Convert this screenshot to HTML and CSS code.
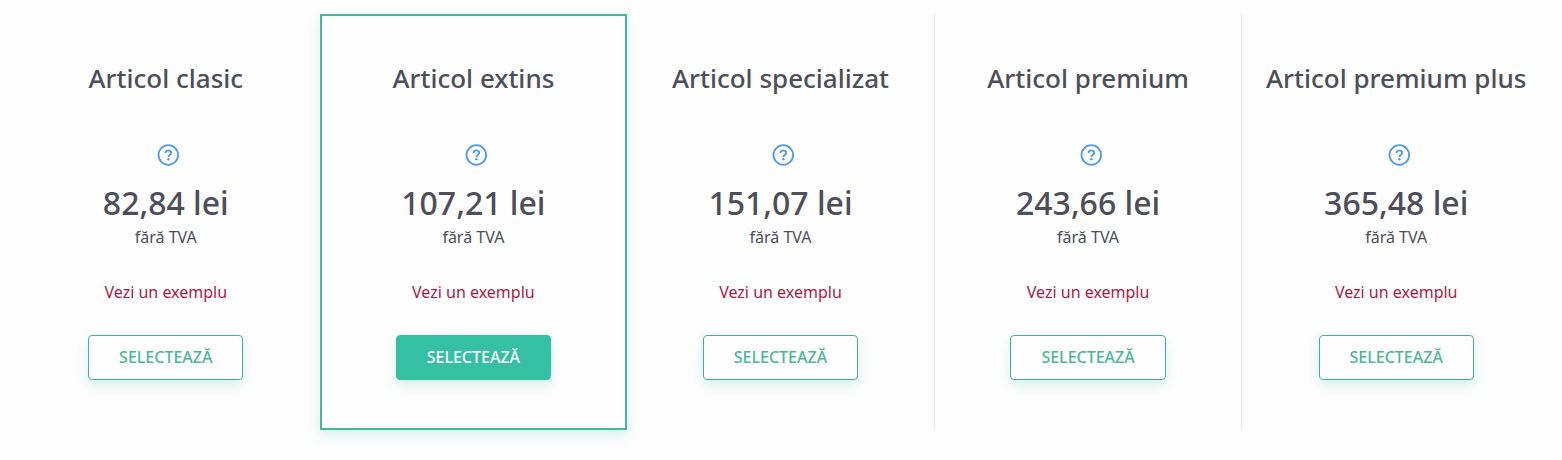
FILE: index.html
```html
<!DOCTYPE html>
<html lang="ro">
<head>
<meta charset="utf-8">
<meta name="viewport" content="width=device-width, initial-scale=1">
<title>Tipuri de articole</title>
<link rel="stylesheet" href="styles.css">
</head>
<body>
<svg class="sprite" aria-hidden="true">
  <symbol id="help" viewBox="0 0 22 22">
    <circle cx="11.3" cy="11" r="9.8" fill="none" stroke="currentColor" stroke-width="1.8"/>
    <path d="M8.5 9C8.5 7.3 9.7 6.3 11.3 6.3s2.9 .9 2.9 2.5c0 2-2.8 2-2.8 4.2" fill="none" stroke="currentColor" stroke-width="1.8"/>
    <circle cx="11.4" cy="15.3" r="1.2" fill="currentColor"/>
  </symbol>
</svg>
<main class="plans">
  <section class="plan">
    <h2 class="plan-title">Articol clasic</h2>
    <button class="help" type="button" aria-label="Detalii"><svg class="help-icon"><use href="#help"/></svg></button>
    <p class="price">82,84 lei</p>
    <p class="tax">fără TVA</p>
    <a class="example" href="#">Vezi un exemplu</a>
    <button class="select" type="button">SELECTEAZĂ</button>
  </section>
  <section class="plan plan-active">
    <h2 class="plan-title">Articol extins</h2>
    <button class="help" type="button" aria-label="Detalii"><svg class="help-icon"><use href="#help"/></svg></button>
    <p class="price">107,21 lei</p>
    <p class="tax">fără TVA</p>
    <a class="example" href="#">Vezi un exemplu</a>
    <button class="select select-active" type="button">SELECTEAZĂ</button>
  </section>
  <section class="plan plan-divided">
    <h2 class="plan-title">Articol specializat</h2>
    <button class="help" type="button" aria-label="Detalii"><svg class="help-icon"><use href="#help"/></svg></button>
    <p class="price">151,07 lei</p>
    <p class="tax">fără TVA</p>
    <a class="example" href="#">Vezi un exemplu</a>
    <button class="select" type="button">SELECTEAZĂ</button>
  </section>
  <section class="plan plan-divided">
    <h2 class="plan-title">Articol premium</h2>
    <button class="help" type="button" aria-label="Detalii"><svg class="help-icon"><use href="#help"/></svg></button>
    <p class="price">243,66 lei</p>
    <p class="tax">fără TVA</p>
    <a class="example" href="#">Vezi un exemplu</a>
    <button class="select" type="button">SELECTEAZĂ</button>
  </section>
  <section class="plan">
    <h2 class="plan-title">Articol premium plus</h2>
    <button class="help" type="button" aria-label="Detalii"><svg class="help-icon"><use href="#help"/></svg></button>
    <p class="price">365,48 lei</p>
    <p class="tax">fără TVA</p>
    <a class="example" href="#">Vezi un exemplu</a>
    <button class="select" type="button">SELECTEAZĂ</button>
  </section>
</main>
</body>
</html>
```

FILE: styles.css
```css
* {
  box-sizing: border-box;
}

body {
  margin: 0;
  background: #fefefe;
  color: #4c4e5a;
  font-family: "Noto Sans", sans-serif;
  font-size: 16px;
  line-height: 24px;
}

.sprite {
  display: none;
}

.plans {
  display: grid;
  grid-template-columns: repeat(5, 1fr);
  padding: 14px 12px 30px;
}

.plan {
  display: flex;
  flex-direction: column;
  align-items: center;
  padding: 48px 10px 50px;
  text-align: center;
}

.plan-divided {
  border-right: 1px solid #ebebeb;
}

.plan-active {
  padding: 46px 8px 48px;
  border: 2px solid #44b89d;
  box-shadow: 0 5px 12px rgba(53, 191, 163, 0.22);
}

.plan-title {
  margin: 0;
  font-size: 26px;
  font-weight: 500;
  line-height: 32px;
}

.help {
  display: flex;
  margin: 50px 0 0 5px;
  padding: 0;
  border: 0;
  background: none;
  color: #4f9be4;
}

.help-icon {
  width: 22px;
  height: 22px;
}

.price {
  margin: 17px 0 0;
  font-size: 32px;
  font-weight: 500;
  line-height: 40px;
}

.tax {
  margin: 2px 0 0;
}

.example {
  margin-top: 31px;
  color: #ad1a45;
  text-decoration: none;
}

.select {
  margin-top: 31px;
  padding: 9px 30px 10px;
  border: 1px solid #44b09b;
  border-radius: 4px;
  background: #fefefe;
  box-shadow: 0 5px 12px rgba(53, 191, 163, 0.22);
  color: #4bb798;
  font-family: inherit;
  font-size: 16px;
  font-weight: 500;
  line-height: 24px;
}

.select-active {
  border-color: #35bfa3;
  background: #35bfa3;
  color: #fff;
}
```
